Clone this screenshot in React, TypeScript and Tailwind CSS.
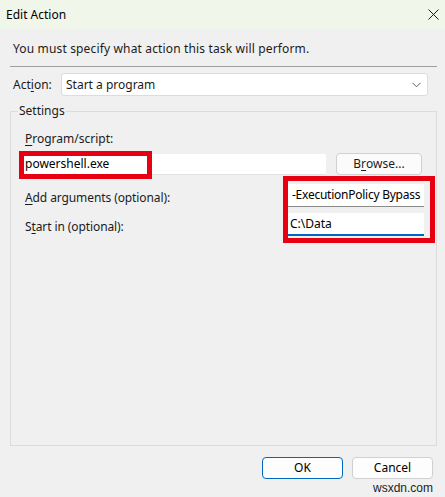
import { ReactNode } from 'react';

const Key = ({ children }: { children: ReactNode }) => (
  <span className="underline underline-offset-[2px] decoration-[1px]">{children}</span>
);

function Annotation({ className }: { className: string }) {
  return <div className={`pointer-events-none absolute border-[5px] border-[#e60012] ${className}`} />;
}

export default function App() {
  return (
    <div
      className="flex h-[497px] w-[445px] flex-col overflow-hidden bg-[#f0f0f0] text-[12px] leading-[16px] text-[#1b1b1b]"
      style={{ fontFamily: '"Noto Sans", "Open Sans", sans-serif' }}
    >
      {/* title bar */}
      <div className="flex h-[29px] shrink-0 items-center justify-between bg-[#f1f6ea] pl-[6px] pr-[5px]">
        <span className="text-[12px] text-black">Edit Action</span>
        <svg width="11" height="11" viewBox="0 0 11 11" className="mr-[1px]">
          <path d="M0.5 0.5 L10.5 10.5 M10.5 0.5 L0.5 10.5" stroke="#1a1a1a" strokeWidth="1" />
        </svg>
      </div>

      <div className="flex flex-1 flex-col px-[10px]">
        <p className="mt-[12px] pl-[3px] tracking-[0.15px]">You must specify what action this task will perform.</p>
        <div className="mr-[-2px] mt-[9px] h-px bg-[#a0a0a0]" />

        {/* action */}
        <div className="mt-[6px] flex h-[23px] items-center">
          <span className="w-[51px] pl-[3px]">
            Act<Key>i</Key>on:
          </span>
          <div className="flex h-[23px] w-[367px] items-center justify-between rounded-[3px] border border-[#dcdcdc] bg-white pl-[4px] pr-[6px]">
            <span>Start a program</span>
            <svg width="9" height="6" viewBox="0 0 9 6">
              <path d="M0.5 0.8 L4.5 4.8 L8.5 0.8" fill="none" stroke="#606060" strokeWidth="1" />
            </svg>
          </div>
        </div>

        {/* settings group */}
        <div className="relative mr-[-2px] mt-[15px] h-[335px] border border-[#dcdcdc]">
          <span className="absolute left-[7px] top-[-9px] bg-[#f0f0f0] px-[1px]">Settings</span>

          <div className="flex flex-col pl-[12px] pr-[12px]">
            <span className="mt-[19px] pl-[2px]">
              <Key>P</Key>rogram/script:
            </span>

            <div className="mt-[6px] flex items-center">
              <div className="relative flex h-[21px] w-[303px] items-center border-b border-[#e2e2e2] bg-white pl-[2px]">
                <span className="text-black">powershell.exe</span>
                <Annotation className="left-[-4px] top-[-3px] h-[28px] w-[133px]" />
              </div>
              <button className="ml-[10px] flex h-[22px] w-[86px] items-center justify-center rounded-[4px] border border-[#d0d0d0] bg-[#fbfbfb]">
                B<Key>r</Key>owse...
              </button>
            </div>

            <div className="mt-[9px] flex justify-between">
              <div className="flex flex-col pl-[2px] tracking-[-0.1px]">
                <span className="mt-[6px]">
                  <Key>A</Key>dd arguments (optional):
                </span>
                <span className="mt-[13px]">
                  S<Key>t</Key>art in (optional):
                </span>
              </div>
              <div className="relative flex w-[136px] flex-col">
                <div className="flex h-[23px] items-center overflow-hidden whitespace-nowrap border-b border-[#8a8a8a] bg-white pl-[4px] tracking-[-0.25px] text-black">
                  -ExecutionPolicy Bypass
                </div>
                <div className="mt-[6px] flex h-[23px] items-center border-b-2 border-[#0067c0] bg-white pl-[2px] text-black">
                  C:\Data
                </div>
                <Annotation className="left-[-5px] top-[-8px] h-[67px] w-[152px]" />
              </div>
            </div>
          </div>
        </div>

        {/* buttons */}
        <div className="mr-[2px] mt-[11px] flex justify-end gap-[9px]">
          <button className="h-[22px] w-[81px] rounded-[4px] border border-[#0067c0] bg-[#fdfdfd] text-black">OK</button>
          <button className="h-[22px] w-[81px] rounded-[4px] border border-[#d0d0d0] bg-[#fdfdfd] text-black">Cancel</button>
        </div>
        <div
          className="mr-[2px] mt-[2px] text-right text-[12px] leading-[14px] text-[#222]"
          style={{ fontFamily: '"Liberation Sans", Arial, sans-serif' }}
        >
          wsxdn.com
        </div>
      </div>
    </div>
  );
}
